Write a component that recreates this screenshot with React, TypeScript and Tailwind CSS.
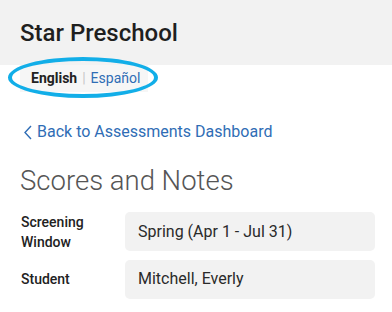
import React from 'react'

const rows = [
  { label: 'Screening Window', value: 'Spring (Apr 1 - Jul 31)' },
  { label: 'Student', value: 'Mitchell, Everly' },
]

export default function App() {
  return (
    <div className="relative h-[312px] w-[392px] overflow-hidden bg-white font-['Roboto',sans-serif] text-[#222]">
      <header className="flex h-[65px] items-center bg-[#f2f2f2] px-5">
        <h1 className="text-[24px] leading-none font-medium text-[#1f1f1f]">
          Star Preschool
        </h1>
      </header>

      <div className="pr-[17px] pl-5">
        <div className="flex h-[27px] w-[128px] items-center bg-[#f6f6f6] px-[11px] text-[14px]">
          <span className="font-bold text-[#222]">English</span>
          <span className="mx-[5px] text-[#c8c8c8]">|</span>
          <a className="text-[#2f6db5]">Español</a>
        </div>

        <a className="mt-[28px] flex items-center gap-[5px] text-[16px] text-[#2f6db5]">
          <svg width="8" height="15" viewBox="0 0 8 15" fill="none" className="ml-[4px]">
            <path d="M7 1L1 7.5L7 14" stroke="#2f6db5" strokeWidth="1.4" />
          </svg>
          Back to Assessments Dashboard
        </a>

        <h2 className="mt-[23px] text-[27.5px] leading-none font-light text-[#555]">
          Scores and Notes
        </h2>

        <div className="mt-[17px] flex flex-col gap-[8px]">
          {rows.map((row) => (
            <div key={row.label} className="flex items-center">
              <div className="w-[105px] pl-px text-[14px] leading-[20px] font-medium text-[#222]">
                {row.label.split(' ').map((w) => (
                  <div key={w}>{w}</div>
                ))}
              </div>
              <div className="flex h-[39px] flex-1 items-center rounded-[5px] bg-[#f2f2f2] px-[13px] text-[16px] text-[#2a2a2a]">
                {row.value}
              </div>
            </div>
          ))}
        </div>
      </div>

      {/* highlight ring round the language toggle */}
      <div className="pointer-events-none absolute top-[57px] left-[8px] h-[41px] w-[150px] rounded-[50%] border-4 border-[#12aee8]" />
    </div>
  )
}
